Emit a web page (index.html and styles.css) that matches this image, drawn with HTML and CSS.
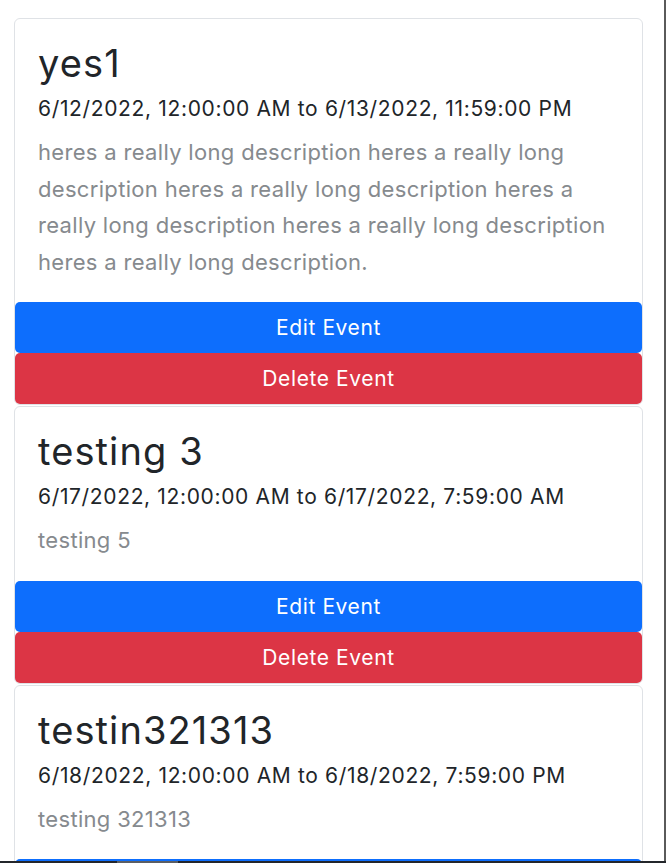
FILE: index.html
```html
<!DOCTYPE html>
<html lang="en">
<head>
<meta charset="utf-8">
<title>Events</title>
<link rel="stylesheet" href="styles.css">
</head>
<body>
<div class="page">
  <main class="list">
    <section class="card">
      <div class="card-body">
        <h1 class="title">yes1</h1>
        <div class="dates">6/12/2022, 12:00:00 AM to 6/13/2022, 11:59:00 PM</div>
        <p class="desc">heres a really long description heres a really long description heres a really long description heres a really long description heres a really long description heres a really long description.</p>
      </div>
      <button class="btn btn-edit">Edit Event</button>
      <button class="btn btn-delete">Delete Event</button>
    </section>
    <section class="card">
      <div class="card-body">
        <h1 class="title">testing 3</h1>
        <div class="dates">6/17/2022, 12:00:00 AM to 6/17/2022, 7:59:00 AM</div>
        <p class="desc">testing 5</p>
      </div>
      <button class="btn btn-edit">Edit Event</button>
      <button class="btn btn-delete">Delete Event</button>
    </section>
    <section class="card">
      <div class="card-body">
        <h1 class="title">testin321313</h1>
        <div class="dates">6/18/2022, 12:00:00 AM to 6/18/2022, 7:59:00 PM</div>
        <p class="desc">testing 321313</p>
      </div>
      <button class="btn btn-edit">Edit Event</button>
      <button class="btn btn-delete">Delete Event</button>
    </section>
  </main>
  <div class="edge"></div>
</div>
<div class="hscroll"><div class="hthumb"></div></div>
</body>
</html>
```

FILE: styles.css
```css
html, body {
  margin: 0;
  padding: 0;
  background: #ffffff;
  overflow: hidden;
  height: 863px;
}

body {
  font-family: Inter, "Noto Sans", sans-serif;
  color: #212529;
}

.page {
  display: flex;
  height: 863px;
}

.list {
  width: 664px;
  padding: 18px 0 0 14px;
  box-sizing: border-box;
  display: flex;
  flex-direction: column;
  gap: 1px;
}

.edge {
  width: 2px;
  background: #5a5a5a;
}

.card {
  width: 629px;
  box-sizing: border-box;
  border: 1px solid #dfe2e6;
  border-radius: 6px;
  display: flex;
  flex-direction: column;
  flex-shrink: 0;
  background: #fff;
}

.card-body {
  padding: 22px 16px 22px 23px;
}

.title {
  margin: 0 0 9px 0;
  font-size: 38px;
  font-weight: 400;
  line-height: 44px;
  letter-spacing: 1.1px;
  color: #212529;
}

.dates {
  font-size: 21px;
  line-height: 30px;
  letter-spacing: 0.65px;
  margin-bottom: 10px;
  color: #212529;
}

.desc {
  margin: 0;
  font-size: 22px;
  line-height: 36.5px;
  letter-spacing: 0.32px;
  color: #868a8e;
}

.btn {
  display: block;
  width: 100%;
  height: 51px;
  border: none;
  border-radius: 5px;
  color: #ffffff;
  font-family: Inter, "Noto Sans", sans-serif;
  font-size: 21px;
  letter-spacing: 0.6px;
  padding: 0;
}

.btn-edit {
  background: #0d6efd;
}

.btn-delete {
  background: #dc3545;
}

.hscroll {
  position: fixed;
  left: 0;
  right: 0;
  bottom: 0;
  height: 2px;
  background: #23262b;
}

.hthumb {
  position: absolute;
  left: 117px;
  width: 61px;
  top: 0;
  height: 2px;
  background: #5b5e63;
}
```
